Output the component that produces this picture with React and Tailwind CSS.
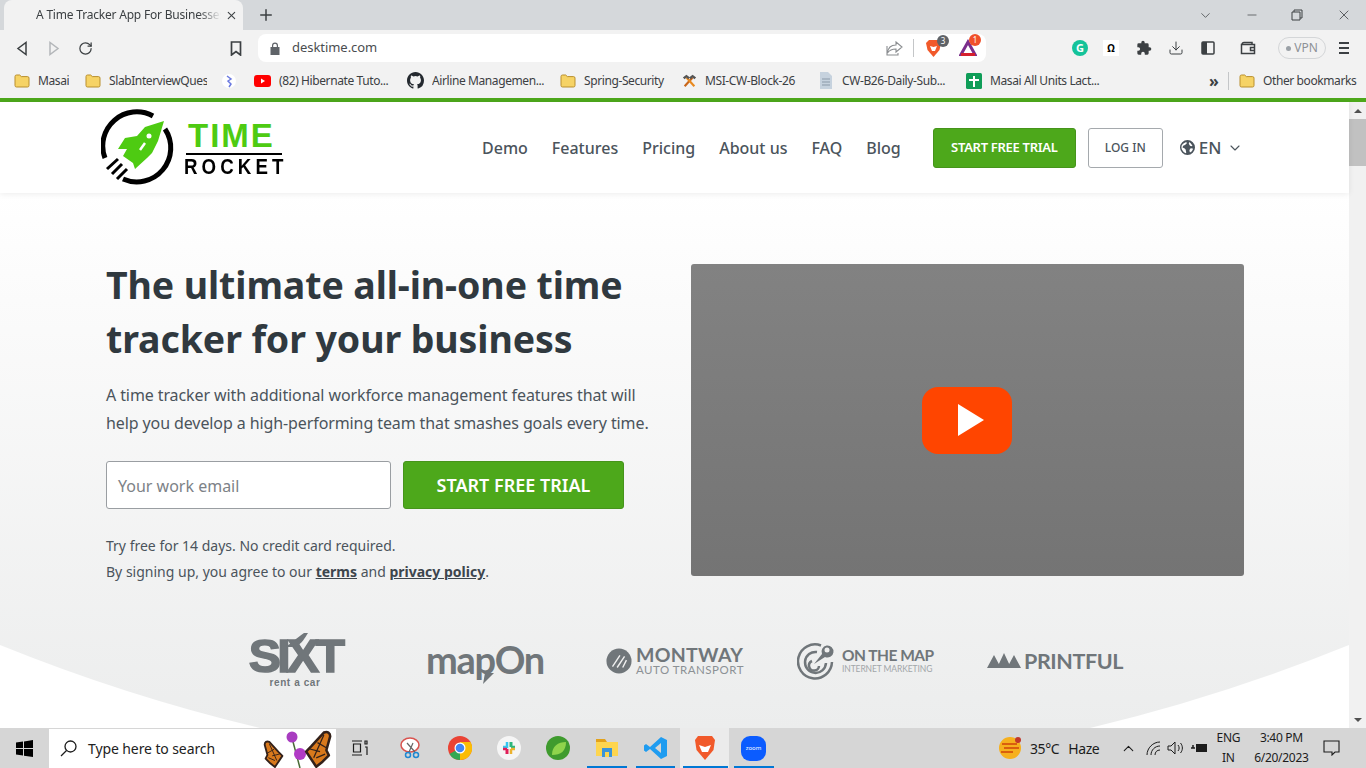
import {
  ChevronDown, ChevronUp, Download, Minus, Plus, RotateCw, X,
} from "lucide-react";

const sans = "font-['Noto_Sans',sans-serif]";

function Folder() {
  return (
    <svg width="16" height="14" viewBox="0 0 16 14" className="shrink-0">
      <path d="M1 2.500A1.500 1.500 0 0 1 2.500 1h3.200l1.600 1.600h6.200A1.500 1.500 0 0 1 15 4.100V11.500A1.500 1.500 0 0 1 13.500 13h-11A1.500 1.500 0 0 1 1 11.500z" fill="#f6d365" stroke="#b98f2e" strokeWidth="1" />
    </svg>
  );
}

function Hammer() {
  return (
    <svg width="15" height="16" viewBox="0 0 17 16" className="shrink-0">
      <path d="M3 14 12 4" stroke="#c8661a" strokeWidth="2.400" />
      <path d="M14 14 5 4" stroke="#e98a1f" strokeWidth="2.400" />
      <path d="M1 4 5 1l4 3-2 2-2-2-2 2z" fill="#555" />
      <path d="M16 4l-4-3-4 3 2 2 2-2 2 2z" fill="#555" />
    </svg>
  );
}

function Bookmark({ icon, label, width }) {
  return (
    <div className="flex items-center gap-[8px] shrink-0">
      {icon}
      <span className={`block whitespace-nowrap overflow-hidden text-[12px] leading-4 tracking-[-0.4px] text-[#3c4043] ${width}`}>{label}</span>
    </div>
  );
}

function TabStrip() {
  return (
    <div className="h-[30px] bg-[#d5d8db] flex items-end pl-[4px] shrink-0">
      <div className="w-[239px] h-[30px] bg-[#f2f2f2] rounded-t-lg flex items-center pl-[32px] pr-[5px]">
        <span className="w-[186px] overflow-hidden whitespace-nowrap text-[12px] tracking-[-0.2px] text-[#3c4043] [mask-image:linear-gradient(to_right,black_88%,transparent)]">A Time Tracker App For Businesses</span>
        <X size={13} strokeWidth={2} className="ml-[4px] text-[#3c4043]" />
      </div>
      <Plus size={18} strokeWidth={2} className="ml-[14px] mb-[6px] text-[#3c4043]" />
      <div className="ml-auto flex items-center h-[30px] text-[#3c4043]">
        <ChevronDown size={15} strokeWidth={1.200} className="mr-[32px]" />
        <Minus size={14} strokeWidth={1.200} className="mr-[32px]" />
        <svg width="12" height="12" viewBox="0 0 12 12" fill="none" stroke="currentColor" className="mr-[33px]">
          <path d="M3 3V1h8v8H9M1 3h8v8H1z" />
        </svg>
        <X size={16} strokeWidth={1.200} className="mr-[14px]" />
      </div>
    </div>
  );
}

function Toolbar() {
  return (
    <div className="h-[36px] bg-[#f2f2f2] flex items-center shrink-0 text-[#3c4043]">
      <svg width="12" height="15" viewBox="0 0 12 15" fill="none" stroke="#3c4043" strokeWidth="1.500" className="ml-[16px]"><path d="M10 1.500v12L2 7.500z" /></svg>
      <svg width="12" height="15" viewBox="0 0 12 15" fill="none" stroke="#b4b7ba" strokeWidth="1.500" className="ml-[20px]"><path d="M2 1.500v12l8-6z" /></svg>
      <RotateCw size={15} strokeWidth={2} className="ml-[18px]" />
      <svg width="12" height="15" viewBox="0 0 12 15" fill="none" stroke="#3c4043" strokeWidth="1.700" className="ml-[137px]"><path d="M1.500 1h9v13L6 10.500 1.500 14z" /></svg>
      <div className="ml-[16px] w-[728px] h-[28px] bg-white rounded-lg flex items-center pl-[12px] pr-[9px]">
        <svg width="10" height="13" viewBox="0 0 10 13" fill="#5f6368"><path d="M2 5V3.500a3 3 0 0 1 6 0V5h1.500v8h-9V5zm1.200 0h3.600V3.500a1.800 1.800 0 0 0-3.600 0z" /></svg>
        <span className="ml-[12px] text-[13px] tracking-[-0.05px] text-[#4a4d50]">desktime.com</span>
        <svg width="17" height="15" viewBox="0 0 17 15" fill="none" stroke="#8a8d90" strokeWidth="1.100" className="ml-auto"><path d="M10 1l6 5-6 5V8C6 8 3.500 9 1.500 12 2 7 5 4 10 4zM1 5v9h11v-2" /></svg>
        <div className="ml-[10px] w-px h-[18px] bg-[#c4c6c8]" />
        <div className="relative ml-[11px] w-[18px] h-[18px]">
          <svg width="17" height="19" viewBox="0 0 17 19"><path d="M4 1h9l3 3-1.500 7-6 7-6-7L1 4z" fill="#f1592a" /><path d="M5 7l3.500 1L12 7l-2 5H7z" fill="#fff" /></svg>
          <span className="absolute -top-[4px] -right-[6px] w-[12px] h-[12px] rounded-full bg-[#5f6368] text-white text-[8px] leading-[12px] text-center">3</span>
        </div>
        <div className="relative ml-[16px] w-[18px] h-[18px]">
          <svg width="18" height="18" viewBox="0 0 18 18" fill="none" strokeWidth="3"><path d="M9 3 2 15.500h14z" stroke="#7b2d8b" /><path d="M2 15.500h14" stroke="#d5202d" /></svg>
          <span className="absolute -top-[5px] -right-[4px] w-[12px] h-[12px] rounded-full bg-[#f0502a] text-white text-[8px] leading-[12px] text-center">1</span>
        </div>
      </div>
      <div className="ml-[86px] w-[16px] h-[16px] rounded-full bg-[#15c39a] text-white text-[11px] leading-[16px] font-bold text-center">G</div>
      <div className="ml-[15px] w-[16px] h-[16px] bg-white text-black text-[10px] leading-[16px] font-bold text-center">Ω</div>
      <svg width="16" height="16" viewBox="0 0 24 24" fill="#3c4043" className="ml-[17px]"><path d="M20.500 11H19V7a2 2 0 0 0-2-2h-4V3.500a2.500 2.500 0 0 0-5 0V5H4a2 2 0 0 0-2 2v3.800h1.500a2.700 2.700 0 0 1 0 5.400H2V20a2 2 0 0 0 2 2h3.800v-1.500a2.700 2.700 0 0 1 5.400 0V22H17a2 2 0 0 0 2-2v-4h1.500a2.500 2.500 0 0 0 0-5z" /></svg>
      <Download size={16} strokeWidth={1.500} className="ml-[16px]" />
      <svg width="14" height="14" viewBox="0 0 14 14" className="ml-[17px]"><rect x="1" y="1" width="12" height="12" rx="1" fill="none" stroke="#3c4043" strokeWidth="1.500" /><rect x="1" y="1" width="5" height="12" fill="#3c4043" /></svg>
      <svg width="16" height="14" viewBox="0 0 16 14" fill="none" stroke="#3c4043" strokeWidth="1.500" className="ml-[25px]"><path d="M2 3.500A2 2 0 0 1 4 1.500h8v2M1.500 3.500h13v9h-13zM14.500 6.500h-4v3h4" /></svg>
      <div className="ml-[22px] w-[48px] h-[22px] rounded-full border border-[#d4d6d8] flex items-center justify-center gap-[3px] text-[12px] text-[#8d9196]">
        <span className="w-[5px] h-[5px] rounded-full bg-[#9aa0a6]" />VPN
      </div>
      <div className="ml-[13px] w-[10px] flex flex-col gap-[3px]">
        <span className="h-[2px] bg-[#3c4043]" /><span className="h-[2px] bg-[#3c4043]" /><span className="h-[2px] bg-[#3c4043]" />
      </div>
    </div>
  );
}

function BookmarksBar() {
  return (
    <div className="h-[32px] bg-[#f2f2f2] flex items-center pl-[14px] pb-[3px] shrink-0">
      <div className="flex items-center gap-[16px]">
        <Bookmark icon={<Folder />} label="Masai" width="w-[31px]" />
        <Bookmark icon={<Folder />} label="SlabInterviewQues" width="w-[98px]" />
        <svg width="14" height="16" viewBox="0 0 14 16" className="shrink-0 ml-[-1px] mr-[2px]"><circle cx="7" cy="8" r="7" fill="#fff" /><path d="M5 3l4 3-3 2 3 3-2 3" fill="none" stroke="#6c7ae0" strokeWidth="1.500" /></svg>
        <Bookmark icon={<svg width="17" height="12" viewBox="0 0 17 12"><rect width="17" height="12" rx="3" fill="#f00" /><path d="M7 3.500v5L11 6z" fill="#fff" /></svg>} label="(82) Hibernate Tuto..." width="w-[112px]" />
        <Bookmark icon={<svg width="17" height="17" viewBox="0 0 16 16" fill="#24292f"><path d="M8 0C3.580 0 0 3.580 0 8c0 3.540 2.290 6.530 5.470 7.590.4.070.55-.170.55-.380 0-.190-.010-.820-.010-1.490-2.010.370-2.530-.490-2.690-.940-.090-.230-.480-.940-.820-1.130-.280-.150-.680-.520-.010-.530.630-.010 1.080.580 1.230.820.720 1.210 1.870.870 2.330.660.070-.520.280-.870.510-1.070-1.780-.200-3.640-.890-3.640-3.950 0-.870.310-1.590.820-2.150-.080-.200-.360-1.020.080-2.120 0 0 .670-.210 2.200.820a7.420 7.420 0 0 1 4 0c1.530-1.040 2.200-.820 2.200-.820.440 1.100.160 1.920.080 2.120.510.560.820 1.270.820 2.150 0 3.070-1.870 3.750-3.650 3.950.290.250.540.730.540 1.480 0 1.070-.010 1.930-.010 2.200 0 .210.150.460.550.380A8.010 8.010 0 0 0 16 8c0-4.420-3.580-8-8-8z" /></svg>} label="Airline Managemen..." width="w-[112px]" />
        <Bookmark icon={<Folder />} label="Spring-Security" width="w-[82px]" />
        <Bookmark icon={<Hammer />} label="MSI-CW-Block-26" width="w-[97px]" />
        <Bookmark icon={<svg width="16" height="17" viewBox="0 0 16 17"><path d="M2 0h8l4 4v13H2z" fill="#c6d2de" /><path d="M4 7h8M4 10h8M4 13h8" stroke="#8a99a8" /></svg>} label="CW-B26-Daily-Sub..." width="w-[108px]" />
        <Bookmark icon={<svg width="16" height="16" viewBox="0 0 16 16"><rect width="16" height="16" rx="1.500" fill="#0f9d58" /><path d="M7 3h2v3h4v2H9v6H7V8H3V6h4z" fill="#fff" /></svg>} label="Masai All Units Lact..." width="w-[112px]" />
      </div>
      <span className="ml-[107px] w-[11px] text-[16px] font-bold text-[#3c4043] leading-none">»</span>
      <div className="ml-[8px] w-px h-[18px] bg-[#c4c6c8]" />
      <div className="ml-[10px]">
        <Bookmark icon={<Folder />} label="Other bookmarks" width="w-[94px]" />
      </div>
    </div>
  );
}

function TimeRocketLogo() {
  return (
    <div className="flex items-center">
      <svg width="74" height="78" viewBox="0 0 74 78" className="shrink-0">
        {/* ring with gaps for the rocket and the exhaust */}
        <path d="M4 49A34 34 0 0 1 52 7" fill="none" stroke="#000" strokeWidth="5" />
        <path d="M64 20A34 34 0 0 1 22 70" fill="none" stroke="#000" strokeWidth="5" />
        <path d="M63 12 44 18 36 27 24 29 17 40 26 40 22 47 32 54 34 60 46 49 51 44 57 32z" fill="#4ecb12" />
        <circle cx="48" cy="27" r="2.500" fill="#fff" />
        <path d="M44 34 39 41" stroke="#fff" strokeWidth="2.500" />
        <path d="M6 60 17 50M11 65 21 55M16 70 26 60" stroke="#000" strokeWidth="3" />
      </svg>
      <div className="ml-[9px] w-[102px] flex flex-col items-start font-['Liberation_Sans',sans-serif] font-bold">
        <span className="ml-[4px] mt-[2px] text-[33px] leading-[30px] tracking-[2px] text-[#4ecb12]">TIME</span>
        <div className="ml-[2px] w-[96px] h-[2px] bg-black mt-[2px]" />
        <span className="mt-[2px] text-[22px] leading-[20px] tracking-[4.800px] text-black whitespace-nowrap origin-left scale-x-[0.85]">ROCKET</span>
      </div>
    </div>
  );
}

function SiteHeader() {
  const links = ["Demo", "Features", "Pricing", "About us", "FAQ", "Blog"];
  return (
    <header className="h-[91px] bg-white relative z-10 shadow-[0_1px_6px_rgba(0,0,0,0.08)] flex items-center pl-[101px] shrink-0">
      <TimeRocketLogo />
      <nav className="ml-[196px] flex items-center gap-[24px] text-[16px] font-medium text-[#4b545c]">
        {links.map((link) => (
          <a key={link}>{link}</a>
        ))}
      </nav>
      <a className="ml-[32px] w-[143px] h-[40px] rounded-[3px] bg-[#4da81b] border border-[#46941b] text-white text-[13px] font-semibold tracking-[-0.3px] flex items-center justify-center">START FREE TRIAL</a>
      <a className="ml-[12px] w-[75px] h-[40px] rounded-[3px] bg-white border border-[#a5a9ad] text-[#4b545c] text-[12px] font-medium flex items-center justify-center">LOG IN</a>
      <div className="ml-[17px] flex items-center text-[#4b545c]">
        <svg width="15" height="15" viewBox="0 0 24 24" fill="#4b545c"><path d="M12 0a12 12 0 1 0 0 24 12 12 0 0 0 0-24zm-2 3 1 2-3 3-3 1-1 3 3 1 2 2 1 5-1 1A10 10 0 0 1 3 8l3-3zm7 2 3 4-2 1-2-1-2-3 1-3zm1 8 3 1-2 4-3 2-1-3 1-3z" /></svg>
        <span className="ml-[4px] text-[17px] font-medium">EN</span>
        <ChevronDown size={16} strokeWidth={1.700} className="ml-[6px]" />
      </div>
    </header>
  );
}

function HeroCopy() {
  return (
    <div className="w-[585px] shrink-0">
      <h1 className="text-[37.500px] leading-[54px] font-bold tracking-[-0.100px] text-[#30393f] whitespace-nowrap">
        The ultimate all-in-one time<br />tracker for your business
      </h1>
      <p className="mt-[15px] text-[16px] leading-[28px] tracking-[-0.100px] text-[#4b545c] whitespace-nowrap">
        A time tracker with additional workforce management features that will<br />
        help you develop a high-performing team that smashes goals every time.
      </p>
      <form className="mt-[24px] flex gap-[12px]">
        <div className="w-[285px] h-[48px] rounded-[3px] border border-[#9a9ea2] bg-white pl-[11px] pt-px flex items-center text-[16px] text-[#7d8287]">Your work email</div>
        <div className="w-[221px] h-[48px] rounded-[3px] border border-[#46941b] bg-[#4da81b] text-white text-[18px] font-semibold pt-px flex items-center justify-center">START FREE TRIAL</div>
      </form>
      <p className="mt-[24px] text-[14px] leading-[26px] text-[#4b545c] whitespace-nowrap">
        Try free for 14 days. No credit card required.<br />
        By signing up, you agree to our <b className="underline text-[#3d464d]">terms</b> and <b className="underline text-[#3d464d]">privacy policy</b>.
      </p>
    </div>
  );
}

function VideoPoster() {
  return (
    <div className="mt-[6px] w-[553px] h-[312px] rounded-[3px] bg-gradient-to-b from-[#828282] to-[#747474] flex items-center justify-center">
      <div className="w-[90px] h-[67px] -ml-[1px] rounded-[16px] bg-[#ff4500] flex items-center justify-center">
        <svg width="28" height="34" viewBox="0 0 28 34" className="ml-[8px]"><path d="M1 1v32l26-16z" fill="#fff" /></svg>
      </div>
    </div>
  );
}

function ClientLogos() {
  return (
    <div className="mt-[48px] ml-[246px] flex items-center text-[#70767a]">
      <div className="relative w-[98px] pt-[4px] flex flex-col items-center font-['Liberation_Sans',sans-serif]">
        <svg width="30" height="16" viewBox="0 0 30 16" className="absolute -top-[1px] left-[36px]"><path d="M2 15C10 12 14 6 22 1c0 0 2 0 4 0-3 5-6 10-12 14z" fill="currentColor" /></svg>
        <span className="text-[46px] leading-[38px] font-bold tracking-[-3.500px] scale-x-[1.05] whitespace-nowrap [-webkit-text-stroke:1.500px_#70767a]">SIXT</span>
        <span className="mt-[3px] text-[10px] leading-[10px] font-bold tracking-[0.600px]">rent a car</span>
      </div>
      <div className="relative ml-[82px] -mt-[4px] w-[118px] font-['Lato',sans-serif]">
        <span className="block text-[38px] leading-[36px] font-bold tracking-[-1.300px] whitespace-nowrap">mapOn</span>
        <svg width="12" height="11" viewBox="0 0 12 11" className="absolute -bottom-[7px] left-[56px]"><path d="M3 0h9L1 11z" fill="currentColor" /></svg>
      </div>
      <div className="ml-[62px] w-[138px] flex items-center">
        <svg width="26" height="26" viewBox="0 0 28 28" className="shrink-0"><circle cx="14" cy="14" r="13.500" fill="currentColor" /><path d="M7 20 15 8M12 21l8-12M18 21l4-8" stroke="#f0f0f0" strokeWidth="1.500" /></svg>
        <div className="ml-[4px] flex flex-col gap-[1px] font-['Lato',sans-serif]">
          <span className="text-[19.500px] leading-[17px] font-bold tracking-[0.300px]">MONTWAY</span>
          <span className="text-[11.500px] leading-[12px] text-[#8c9195] tracking-[0.500px] whitespace-nowrap">AUTO TRANSPORT</span>
        </div>
      </div>
      <div className="ml-[53px] w-[137px] flex items-center">
        <svg width="38" height="38" viewBox="0 0 38 38" fill="none" stroke="currentColor" className="shrink-0"><path d="M24 3.500A17 17 0 1 0 35 20" strokeWidth="2.500" /><path d="M20 10A10.500 10.500 0 1 0 29 21" strokeWidth="2.500" /><path d="M15 19a5 5 0 1 0 7 5" strokeWidth="2.500" /><path d="M17 22 25 12a6 6 0 1 1 3 3z" fill="currentColor" stroke="none" /><circle cx="30" cy="8" r="2.500" fill="#f0f0f0" stroke="none" /></svg>
        <div className="ml-[7px] flex flex-col gap-[1px] font-['Lato',sans-serif]">
          <span className="text-[15.500px] leading-[16px] font-bold tracking-[-0.500px] whitespace-nowrap">ON THE MAP</span>
          <span className="text-[8.500px] leading-[10px] text-[#a2a6a9] tracking-[-0.100px] whitespace-nowrap">INTERNET MARKETING</span>
        </div>
      </div>
      <div className="ml-[53px] w-[137px] flex items-center">
        <svg width="34" height="15" viewBox="0 0 34 15" fill="currentColor" className="shrink-0"><path d="M0 15 7 2l7 13zM10 15l7-15 7 15zM20 15 27 2l7 13z" /></svg>
        <span className="ml-[3px] text-[21.500px] leading-[24px] font-bold tracking-[-0.400px] font-['Lato',sans-serif]">PRINTFUL</span>
      </div>
    </div>
  );
}

function Hero() {
  return (
    <section className="relative flex-1 overflow-hidden bg-white">
      {/* large arc behind the hero, cut off by the white page below */}
      <svg width="1349" height="535" viewBox="0 0 1349 535" className="absolute inset-0">
        <defs>
          <linearGradient id="heroFade" x1="0" y1="0" x2="0" y2="1">
            <stop offset="0" stopColor="#ffffff" />
            <stop offset="0.2" stopColor="#fbfbfb" />
            <stop offset="1" stopColor="#eceded" />
          </linearGradient>
        </defs>
        <path d="M0 0H1349V452A1797 1797 0 0 1 1090 535H260A1797 1797 0 0 1 0 452Z" fill="url(#heroFade)" />
      </svg>
      <div className="relative pt-[65px]">
        <div className="flex pl-[106px]">
          <HeroCopy />
          <VideoPoster />
        </div>
        <ClientLogos />
      </div>
    </section>
  );
}

function Scrollbar() {
  return (
    <div className="w-[17px] bg-[#f1f1f1] flex flex-col items-center shrink-0">
      <div className="h-[17px] flex items-center justify-center">
        <span className="border-x-[4px] border-x-transparent border-b-[4px] border-b-[#505050]" />
      </div>
      <div className="w-full h-[47px] bg-[#c1c1c1]" />
      <div className="mt-auto h-[17px] flex items-center justify-center">
        <span className="border-x-[4px] border-x-transparent border-t-[4px] border-t-[#505050]" />
      </div>
    </div>
  );
}

function Butterfly({ width, height, className }) {
  return (
    <svg width={width} height={height} viewBox="0 0 22 30" className={className}>
      <path d="M10 29 2 17 6 13 16 2c3-1 5 0 5 3l-3 11 2 4-5 5z" fill="#d9791c" stroke="#33211a" strokeWidth="2" strokeLinejoin="round" />
      <path d="M8 22 16 4M5 15l8 2M11 10l7 4M10 22l7-3" stroke="#33211a" />
    </svg>
  );
}

function TaskSlot({ active, children }) {
  return (
    <div className={`h-[40px] w-[49px] flex items-center justify-center shrink-0 ${active ? "bg-[#ebebeb]" : ""}`}>
      {children}
    </div>
  );
}

function Taskbar() {
  return (
    <div className="h-[40px] bg-[#d6d6d6] flex items-center shrink-0 text-[#1c1c1c]">
      <svg width="17" height="17" viewBox="0 0 17 17" fill="#000" className="ml-[16px]"><path d="M0 2.500 7 1.500V8H0zM8 1.400 17 0v8H8zM0 9h7v6.500L0 14.500zM8 9h9v8l-9-1.300z" /></svg>
      <div className="ml-[16px] w-[287px] h-[39px] mt-px bg-white flex items-center pl-[11px] overflow-hidden">
        <svg width="17" height="17" viewBox="0 0 17 17" fill="none" stroke="#1c1c1c" strokeWidth="1.300"><circle cx="10.500" cy="6.500" r="5.500" /><path d="M6.500 10.500 1 16" /></svg>
        <span className="ml-[11px] text-[14px] tracking-[-0.100px] text-[#222]">Type here to search</span>
        <div className="ml-auto mr-[4px] flex items-center">
          <Butterfly width="22" height="28" className="-scale-x-100 mt-[10px]" />
          <svg width="22" height="38" viewBox="0 0 22 38" className="shrink-0">
            <path d="M7 8 15 38" stroke="#4a6b35" strokeWidth="1.500" />
            <circle cx="7" cy="7" r="5.500" fill="#a83cc0" />
            <circle cx="15" cy="24" r="6" fill="#b13bc6" />
          </svg>
          <Butterfly width="29" height="38" className="-ml-[4px]" />
        </div>
      </div>
      {/* task view */}
      <svg width="18" height="16" viewBox="0 0 18 16" fill="none" stroke="#1c1c1c" strokeWidth="1.200" className="ml-[15px]"><path d="M1 1h10M1 15h10M2.500 4h7v8h-7zM14 1h2v3h-2zM14 7h2v8" /></svg>
      <div className="ml-[17px] flex items-center">
        <TaskSlot>
          <svg width="24" height="24" viewBox="0 0 24 24" fill="none"><ellipse cx="11" cy="9" rx="9" ry="7" stroke="#d9534f" strokeWidth="1.500" fill="#fff" /><path d="M8 7l8 9M14 7l-4 9" stroke="#666" strokeWidth="1.200" /><circle cx="9" cy="19" r="2.500" stroke="#1e88d2" strokeWidth="1.500" /><circle cx="17" cy="19" r="2.500" stroke="#1e88d2" strokeWidth="1.500" /></svg>
        </TaskSlot>
        <TaskSlot>
          <svg width="24" height="24" viewBox="0 0 24 24"><circle cx="12" cy="12" r="12" fill="#ea4335" /><path d="M12 12 1.500 18A12 12 0 0 0 12 24z" fill="#34a853" /><path d="M12 6h10.500A12 12 0 0 1 12 24z" fill="#fbbc05" /><circle cx="12" cy="12" r="5.500" fill="#fff" /><circle cx="12" cy="12" r="4.300" fill="#4285f4" /></svg>
        </TaskSlot>
        <TaskSlot>
          <svg width="24" height="24" viewBox="0 0 24 24"><circle cx="12" cy="12" r="12" fill="#f5f5f5" /><path d="M10 6v5H6" stroke="#36c5f0" strokeWidth="2.500" fill="none" /><path d="M14 6v5" stroke="#2eb67d" strokeWidth="3" /><path d="M14 11h4" stroke="#2eb67d" strokeWidth="2.500" /><path d="M10 13v5" stroke="#e01e5a" strokeWidth="3" /><path d="M6 13h4" stroke="#e01e5a" strokeWidth="2.500" /><path d="M14 13v5M14 13h4" stroke="#ecb22e" strokeWidth="2.500" /></svg>
        </TaskSlot>
        <TaskSlot>
          <svg width="24" height="26" viewBox="0 0 24 26"><circle cx="12" cy="13" r="12" fill="#3f9b2e" /><path d="M6 20C6 11 12 7 20 7c0 9-5 13-14 13z" fill="#8fd44c" /></svg>
        </TaskSlot>
        <TaskSlot>
          <svg width="24" height="22" viewBox="0 0 24 22"><path d="M1 2h9l2 3H1z" fill="#e3a21a" /><path d="M1 5h22v14H1z" fill="#fdd54f" /><path d="M7 11h10v9H7z" fill="#3b94d9" /><path d="M10 15h4v5h-4z" fill="#fdd54f" /></svg>
        </TaskSlot>
        <TaskSlot>
          <svg width="24" height="24" viewBox="0 0 24 24"><path d="M17 1 23 4v16l-6 3L6 13l-4 3-2-1.500V9.500L2 8l4 3z" fill="#1f9cf0" /><path d="M17 7 11 12l6 5z" fill="#d6d6d6" /></svg>
        </TaskSlot>
        <TaskSlot active>
          <svg width="22" height="26" viewBox="0 0 22 26"><path d="M4 1h14l3 4-1.500 10L11 25 2.500 15 1 5z" fill="#f1592a" /><path d="M5 10l6 2 6-2-3 7H8z" fill="#fff" /></svg>
        </TaskSlot>
        <TaskSlot>
          <div className="w-[25px] h-[25px] rounded-[9px] bg-[#0b5cff] text-white text-[6px] leading-[25px] text-center">zoom</div>
        </TaskSlot>
      </div>
      <svg width="24" height="24" viewBox="0 0 24 24" className="ml-[220px]"><circle cx="12" cy="12" r="11" fill="#f6b01e" /><path d="M4 8h15M6 12h15M3 16h12" stroke="#d95f0e" strokeWidth="2" /><circle cx="20" cy="4" r="3" fill="#c0392b" /></svg>
      <span className="ml-[8px] text-[14px] tracking-[-0.4px]">35°C</span>
      <span className="ml-[9px] text-[14px] tracking-[-0.4px]">Haze</span>
      <ChevronUp size={17} strokeWidth={1.500} className="ml-[21px]" />
      <svg width="15" height="14" viewBox="0 0 15 14" fill="none" stroke="#1c1c1c" strokeWidth="1" className="ml-[9px]"><path d="M1 14C1 7 7 1 14 1M5 14C5 9 9 5 14 5M9 14c0-3 2-5 5-5" /></svg>
      <svg width="16" height="14" viewBox="0 0 16 14" fill="none" stroke="#1c1c1c" strokeWidth="1" className="ml-[6px]"><path d="M1 5h3l4-4v12L4 9H1zM11 4c1.500 2 1.500 4 0 6M13.500 2c2.500 3 2.500 7 0 10" /></svg>
      <svg width="17" height="12" viewBox="0 0 17 12" className="ml-[8px]"><rect x="5" y="2" width="11" height="8" fill="#1c1c1c" /><path d="M0 6h4M2 3v3" stroke="#1c1c1c" strokeWidth="1.500" /></svg>
      <div className="ml-[8px] w-[24px] flex flex-col items-center text-[12px] leading-[20px] tracking-[-0.2px]">
        <span>ENG</span><span>IN</span>
      </div>
      <div className="ml-[14px] w-[54px] flex flex-col items-center text-[12px] leading-[20px] tracking-[-0.3px] whitespace-nowrap">
        <span>3:40 PM</span><span>6/20/2023</span>
      </div>
      <svg width="17" height="16" viewBox="0 0 17 16" fill="none" stroke="#1c1c1c" strokeWidth="1.100" className="ml-[15px]"><path d="M1 1h15v11h-4l-3 3v-3H1z" /></svg>
    </div>
  );
}

function Underlines() {
  return (
    <div className="absolute bottom-0 left-[587px] flex">
      <span className="w-[40px] h-[2px] bg-[#0078d4]" />
      <span className="ml-[9px] w-[39px] h-[2px] bg-[#0078d4]" />
      <span className="ml-[8px] w-[45px] h-[2px] bg-[#0078d4]" />
      <span className="ml-[6px] w-[40px] h-[2px] bg-[#0078d4]" />
    </div>
  );
}

export default function App() {
  return (
    <div className={`relative h-screen w-full flex flex-col overflow-hidden bg-white ${sans}`}>
      <TabStrip />
      <Toolbar />
      <BookmarksBar />
      <div className="h-[4px] bg-[#4da81b] shrink-0" />
      <div className="flex flex-1 min-h-0">
        <div className="flex-1 flex flex-col min-w-0">
          <SiteHeader />
          <Hero />
        </div>
        <Scrollbar />
      </div>
      <Taskbar />
      <Underlines />
    </div>
  );
}
